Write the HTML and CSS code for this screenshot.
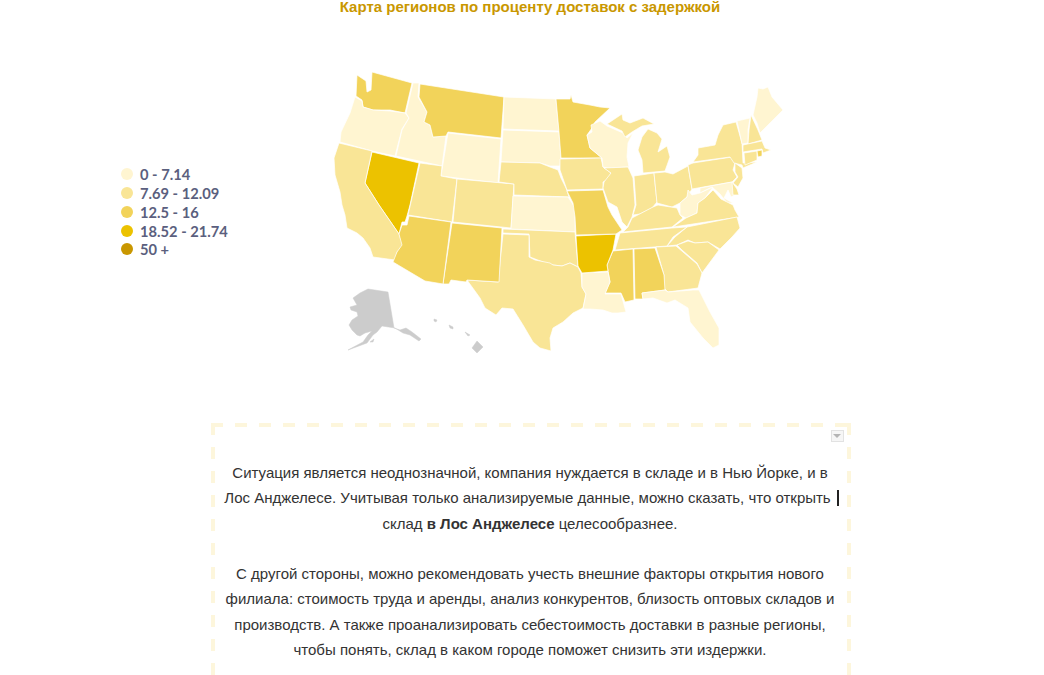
FILE: index.html
```html
<!DOCTYPE html>
<html lang="ru">
<head>
<meta charset="utf-8">
<title>Карта регионов</title>
<link rel="stylesheet" href="styles.css">
</head>
<body>
<main class="page">
  <h1 class="title">Карта регионов по проценту доставок с задержкой</h1>
  <section class="viz">
    <ul class="legend">
      <li class="legend-item"><span class="dot c1"></span>0 - 7.14</li>
      <li class="legend-item"><span class="dot c2"></span>7.69 - 12.09</li>
      <li class="legend-item"><span class="dot c3"></span>12.5 - 16</li>
      <li class="legend-item"><span class="dot c4"></span>18.52 - 21.74</li>
      <li class="legend-item"><span class="dot c5"></span>50 +</li>
    </ul>
    <svg class="map" viewBox="330 60 460 300" width="460" height="300" aria-label="Карта США">
      <g class="states">
        <polygon class="c3" points="357,75 366,81 367,92 371,90 372,72 412,83 405,113 390,110 373,110 363,107 362,100 356,96"/>
        <polygon class="c1" points="355,97 362,101 363,107 373,110 390,111 405,113 409,118 402,129 395,156 372,151 340,142 341,132 350,113"/>
        <polygon class="c1" points="413,83 419,83 418,97 427,112 424,122 430,125 433,137 446,136 442,166 396,156 402,130 409,118 406,113"/>
        <polygon class="c3" points="420,84 504,97 501,138 448,132 446,136 433,137 430,125 424,122 427,112 419,97"/>
        <polygon class="c1" points="504,97 556,99 559,131 503,129"/>
        <polygon class="c1" points="503,130 559,132 561,158 560,166 550,166 540,163 501,162"/>
        <polygon class="c1" points="448,133 501,139 498,183 441,176"/>
        <polygon class="c4" points="372,152 419,163 410,205 407,216 405,222 402,222 399,234 379,205 365,183"/>
        <polygon class="c2" points="339,143 372,151 365,183 379,205 399,234 403,245 397,252 395,260 373,257 370,248 363,238 357,233 347,228 345,215 342,205 340,192 335,175 334,158"/>
        <polygon class="c2" points="420,163 442,166 441,176 457,179 452,222 408,215"/>
        <polygon class="c2" points="457,179 514,184 511,228 453,222"/>
        <polygon class="c2" points="501,162 540,163 550,167 558,170 561,178 566,188 569,197 514,195 514,184 499,182"/>
        <polygon class="c1" points="513,196 568,197 572,203 575,208 575,232 511,229"/>
        <polygon class="c2" points="503,229 575,232 578,267 570,263 562,266 553,265 543,262 530,257 529,234 503,233"/>
        <polygon class="c2" points="503,234 529,235 529,257 535,260 550,263 553,265 562,266 570,263 578,267 581,273 582,287 586,294 583,308 573,313 563,322 553,328 550,338 551,351 540,348 533,342 523,325 513,309 502,308 496,315 485,308 480,298 467,280 498,282"/>
        <polygon class="c3" points="452,223 502,228 499,282 467,280 466,282 451,280 449,284 443,284"/>
        <polygon class="c3" points="409,216 451,222 443,284 425,281 393,262 397,252 402,245 399,234 402,225 407,225"/>
        <polygon class="c3" points="556,99 570,99 571,95 573,102 590,105 600,107 610,108 595,122 592,128 587,135 590,148 602,158 561,158 559,132"/>
        <polygon class="c2" points="560,159 601,158 603,167 611,173 608,179 603,182 603,189 567,190 560,170"/>
        <polygon class="c1" points="591,125 600,121 607,126 623,133 627,138 633,133 628,143 627,157 629,167 608,168 603,167 602,158 590,148 587,135 592,132"/>
        <polygon class="c2" points="607,124 622,114 623,120 630,123 643,118 654,124 642,126 632,132 625,137 622,131"/>
        <polygon class="c2" points="648,129 657,133 662,139 658,152 667,146 670,157 665,171 643,173 642,160 638,150 642,137"/>
        <polygon class="c2" points="604,168 628,167 633,178 635,205 632,217 627,227 622,222 617,207 608,202 603,188 604,182 611,173"/>
        <polygon class="c2" points="634,176 654,173 657,202 652,208 640,214 633,215 636,205"/>
        <polygon class="c2" points="654,173 665,172 673,174 688,166 692,189 687,197 680,203 672,207 657,203"/>
        <polygon class="c2" points="688,165 693,163 732,157 735,163 733,170 737,177 732,182 692,189"/>
        <polygon class="c2" points="693,162 698,155 698,148 715,145 718,135 723,125 736,122 742,143 743,163 757,162 743,168 742,165 734,163 730,157"/>
        <polygon class="c1" points="737,121 750,118 748,130 748,143 742,144"/>
        <polygon class="c2" points="751,115 758,130 762,140 748,144 749,130"/>
        <polygon class="c1" points="753,115 757,97 758,88 763,89 768,87 772,97 783,110 770,123 763,130 760,133 757,123"/>
        <polygon class="c2" points="743,145 762,141 765,148 771,150 763,153 762,149 743,152"/>
        <polygon class="c2" points="744,153 757,151 757,160 745,165"/>
        <polygon class="c3" points="757,151 762,150 762,156 758,157"/>
        <polygon class="c2" points="735,163 742,168 743,178 738,187 733,183 738,177 735,172"/>
        <polygon class="c1" points="700,188 732,182 735,195 731,197 728,190 724,198 733,203 727,203 720,194 712,187 700,193"/>
        <polygon class="c2" points="732,182 737,189 739,195 733,195"/>
        <polygon class="c1" points="688,190 692,195 700,193 713,187 705,198 698,203 697,213 686,218 680,215 680,203 687,197"/>
        <polygon class="c2" points="713,190 721,199 733,205 735,210 739,217 673,227 686,218 697,213 698,203 705,198"/>
        <polygon class="c2" points="737,217 740,228 732,237 720,249 708,242 695,243 688,240 677,245 667,246 675,237 687,227"/>
        <polygon class="c2" points="687,227 673,237 667,246 615,250 620,233 672,228"/>
        <polygon class="c2" points="628,227 632,218 653,207 658,205 677,208 680,215 683,218 672,227 623,232"/>
        <polygon class="c2" points="677,245 688,241 695,243 708,242 719,250 702,273 697,263 682,250"/>
        <polygon class="c2" points="656,247 676,246 697,264 702,273 698,288 668,292 664,288 664,275"/>
        <polygon class="c3" points="634,249 655,248 664,275 665,290 642,293 643,299 635,299"/>
        <polygon class="c3" points="613,251 633,249 634,300 625,302 621,293 605,293 610,282 607,265"/>
        <polygon class="c1" points="582,273 608,272 610,282 605,294 621,294 626,312 618,313 612,313 603,310 590,309 583,309 586,294 582,287"/>
        <polygon class="c4" points="576,236 616,234 613,250 607,265 608,271 582,273 578,266"/>
        <polygon class="c3" points="567,191 603,190 608,207 612,215 622,230 616,234 576,235 575,217 573,203"/>
        <polygon class="c1" points="642,293 665,290 668,292 693,290 699,290 710,312 719,328 719,345 713,348 703,338 690,322 688,308 675,300 667,303 653,298 643,299"/>
      </g>
      <g class="other">
        <polygon points="368,289 388,292 394,328 400,330 406,328 412,332 421,339 419,341 410,335 403,333 395,328 382,326 377,332 373,335 367,343 348,350 363,342 368,335 372,331 365,333 360,336 357,335 352,330 349,325 352,320 358,316 357,312 351,310 350,307 357,305 353,298 360,293"/>
        <polygon points="370,342 374,339 373,342"/>
        <polygon points="434,319 437,320 436,322 434,321"/>
        <polygon points="449,325 453,327 453,329 450,328"/>
        <polygon points="465,332 470,335 468,336"/>
        <polygon points="477,341 483,347 477,353 472,348"/>
      </g>
    </svg>
  </section>
  <section class="note">
    <span class="menu-btn"></span>
    <p class="note-text">Ситуация является неоднозначной, компания нуждается в складе и в Нью Йорке, и в Лос Анджелесе. Учитывая только анализируемые данные, можно сказать, что открыть<span class="caret"></span> склад <strong>в Лос Анджелесе</strong> целесообразнее.</p>
    <p class="note-text">С другой стороны, можно рекомендовать учесть внешние факторы открытия нового филиала: стоимость труда и аренды, анализ конкурентов, близость оптовых складов и производств. А также проанализировать себестоимость доставки в разные регионы, чтобы понять, склад в каком городе поможет снизить эти издержки.</p>
  </section>
</main>
</body>
</html>
```

FILE: styles.css
```css
* { box-sizing: border-box; }
html, body { margin: 0; height: 675px; overflow: hidden; background: #fff; }
.page { width: 1060px; font-family: "Liberation Sans", Arial, sans-serif; }
.title { margin: 0; height: 60px; font-size: 15px; line-height: 14px; font-weight: 700; color: #c99700; text-align: center; }
.viz { display: flex; align-items: flex-start; height: 363px; }
.legend { list-style: none; margin: 105px 0 0 121px; padding: 0; width: 209px; font-family: Lato, sans-serif; font-weight: 700; font-size: 14.7px; color: #5b5f7e; }
.legend-item { display: flex; align-items: center; gap: 7px; height: 18.75px; white-space: nowrap; }
.dot { width: 12px; height: 12px; border-radius: 50%; flex: none; }
.dot.c1 { background: #fff5d1; }
.dot.c2 { background: #f9e596; }
.dot.c3 { background: #f2d35a; }
.dot.c4 { background: #ecc200; }
.dot.c5 { background: #c99700; }
.map { display: block; flex: none; }
.states polygon { stroke: #fff; stroke-width: .7; stroke-linejoin: round; }
.states .c1 { fill: #fff5d1; }
.states .c2 { fill: #f9e596; }
.states .c3 { fill: #f2d35a; }
.states .c4 { fill: #ecc200; }
.other polygon { fill: #ccc; stroke: #ccc; stroke-width: .5; }
.note {
  position: relative;
  width: 640px;
  height: 300px;
  margin-left: 211px;
  padding: 37px 13px 0 11px;
  background:
    repeating-linear-gradient(90deg, #fdf6dc 0 12px, transparent 12px 24px) top / 100% 4px no-repeat,
    repeating-linear-gradient(180deg, #fdf6dc 0 12px, transparent 12px 24px) left / 4px 100% no-repeat,
    repeating-linear-gradient(180deg, #fdf6dc 0 12px, transparent 12px 24px) right / 4px 100% no-repeat;
}
.menu-btn { position: absolute; top: 7px; right: 7px; width: 13px; height: 12px; border: 1px solid #e2e2e2; background: #f6f6f6; }
.menu-btn::after { content: ""; position: absolute; left: 1px; top: 3px; border: 4px solid transparent; border-top: 4px solid #b5b5b5; border-bottom: 0; }
.note-text { margin: 0 0 25.2px; font-size: 15px; line-height: 25.3px; color: #333; text-align: center; }
.note-text strong { font-weight: 700; }
.caret { display: inline-block; width: 2px; height: 16px; margin: 0 -3px 0 6px; background: #222; vertical-align: -3px; }
```
